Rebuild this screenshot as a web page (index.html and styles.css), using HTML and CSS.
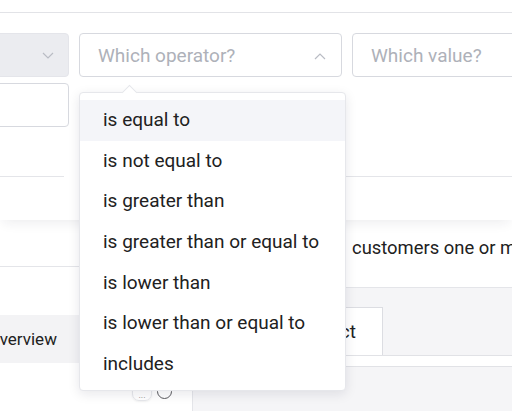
FILE: index.html
```html
<!DOCTYPE html>
<html>
<head>
<meta charset="utf-8">
<link rel="stylesheet" href="styles.css">
</head>
<body>
<div class="page">
  <section class="filter-card">
    <div class="rule"></div>
    <div class="filter-row">
      <div class="select select-disabled">
        <svg class="chev" width="12" height="7" viewBox="0 0 12 7"><polyline points="1,1 6,6 11,1" fill="none" stroke="#b9bcc4" stroke-width="1.2"/></svg>
      </div>
      <div class="select select-op">
        <span class="ph">Which operator?</span>
        <svg class="chev" width="12" height="7" viewBox="0 0 12 7"><polyline points="1,6 6,1 11,6" fill="none" stroke="#b9bcc4" stroke-width="1.2"/></svg>
      </div>
      <div class="select input-value"><span class="ph">Which value?</span></div>
    </div>
    <div class="second-row"><div class="box"></div></div>
    <div class="divider-row"><span class="div-left"></span><span class="div-right"></span></div>
  </section>

  <div class="lower">
    <aside class="sidebar">
      <div class="side-head"></div>
      <nav class="side-nav"><div class="nav-item active">Overview</div></nav>
      <div class="side-foot">
        <span class="more-btn">...</span>
        <span class="spinner"></span>
      </div>
    </aside>
    <main class="main">
      <header class="main-head"><p class="summary">customers one or more times</p></header>
      <div class="tabs"><div class="tab">Product</div></div>
      <div class="toolbar"></div>
    </main>
  </div>

  <ul class="menu">
    <li class="menu-item hover">is equal to</li>
    <li class="menu-item">is not equal to</li>
    <li class="menu-item">is greater than</li>
    <li class="menu-item">is greater than or equal to</li>
    <li class="menu-item">is lower than</li>
    <li class="menu-item">is lower than or equal to</li>
    <li class="menu-item">includes</li>
  </ul>
</div>
</body>
</html>
```

FILE: styles.css
```css
* { box-sizing: border-box; }
html, body { margin: 0; padding: 0; background: #fff; }
body {
  font-family: Roboto, "Liberation Sans", sans-serif;
  font-size: 19px;
  color: #212121;
}
.page {
  position: relative;
  width: 512px;
  height: 411px;
  overflow: hidden;
}

/* top filter card */
.filter-card {
  position: relative;
  z-index: 1;
  height: 220px;
  background: #fff;
  box-shadow: 0 5px 12px -3px rgba(30, 30, 60, 0.09);
  padding-top: 12px;
}
.rule { border-top: 1px solid #e2e3e7; }
.filter-row {
  display: flex;
  gap: 10px;
  margin-top: 20px;
  height: 44px;
}
.select {
  display: flex;
  align-items: center;
  height: 44px;
  border: 1px solid #d7d9df;
  border-radius: 4px;
  background: #fff;
  flex-shrink: 0;
}
.select-disabled {
  width: 200px;
  margin-left: -131px;
  background: #ebecf0;
  border-color: #e4e5ea;
  justify-content: flex-end;
  padding-right: 14px;
}
.select-op {
  width: 263px;
  padding: 0 15px 0 18px;
  justify-content: space-between;
}
.input-value {
  width: 250px;
  padding-left: 18px;
}
.ph { color: #aeb1b9; line-height: 1; }
.chev { display: block; }
.select-op .chev { margin-top: 3px; }

.second-row { margin-top: 6px; height: 44px; }
.box {
  width: 200px;
  height: 44px;
  margin-left: -131px;
  border: 1px solid #d7d9df;
  border-radius: 4px;
}
.divider-row {
  display: flex;
  gap: 15px;
  margin-top: 49px;
}
.div-left { width: 64px; border-top: 1px solid #e4e5e9; }
.div-right { flex: 1; border-top: 1px solid #e4e5e9; }

/* lower area */
.lower {
  display: grid;
  grid-template-columns: 192px 1fr;
  height: 191px;
}
.sidebar { background: #fff; }
.side-head { height: 47px; border-bottom: 1px solid #e4e5e9; }
.side-nav { padding-top: 48px; }
.nav-item {
  height: 48px;
  line-height: 48px;
  font-size: 17px;
  margin-left: -12px;
  padding-left: 0;
  background: #f3f3f5;
}
.side-foot {
  display: flex;
  justify-content: flex-end;
  align-items: center;
  gap: 5px;
  margin-top: 18px;
  padding-right: 20px;
  height: 20px;
}
.more-btn {
  width: 20px;
  height: 19px;
  border: 1px solid #e6e7eb;
  border-radius: 7px;
  font-size: 9px;
  line-height: 24px;
  text-align: center;
  color: #888;
  box-shadow: 0 1px 2px rgba(0,0,0,0.06);
  overflow: hidden;
}
.spinner {
  width: 15px;
  height: 15px;
  border: 1.5px solid #5a5a5e;
  border-radius: 50%;
}

.main {
  background: #f5f5f7;
  border-left: 1px solid #e4e5e9;
}
.main-head {
  height: 68px;
  background: #fff;
  border-bottom: 1px solid #e4e5e9;
  padding: 16px 0 0 159px;
}
.summary { margin: 0; font-size: 18.4px; line-height: 24.64px; white-space: nowrap; }
.tabs {
  display: flex;
  justify-content: flex-end;
  width: 190px;
  padding-top: 19px;
}
.tab {
  height: 48px;
  line-height: 47px;
  padding: 0 26px;
  background: #fff;
  border: 1px solid #dcdde2;
  border-bottom: none;
  white-space: nowrap;
}
.toolbar {
  height: 12px;
  background: #fff;
  border-top: 1px solid #e1e2e6;
  border-bottom: 1px solid #e1e2e6;
}

/* dropdown menu */
.menu {
  position: absolute;
  z-index: 5;
  left: 79px;
  top: 92px;
  width: 267px;
  margin: 0;
  padding: 7px 0 6px;
  list-style: none;
  background: #fff;
  border: 1px solid #e6e7eb;
  border-radius: 4px;
  box-shadow: 0 3px 12px rgba(20, 20, 50, 0.10);
}
.menu::before {
  content: "";
  position: absolute;
  left: 44px;
  top: -6px;
  width: 10px;
  height: 10px;
  background: #fff;
  border-top: 1px solid #e6e7eb;
  border-left: 1px solid #e6e7eb;
  transform: rotate(45deg);
}
.menu-item {
  padding: 8px 23px;
  line-height: 24.64px;
  white-space: nowrap;
}
.menu-item.hover { background: #f4f5f9; }
```
